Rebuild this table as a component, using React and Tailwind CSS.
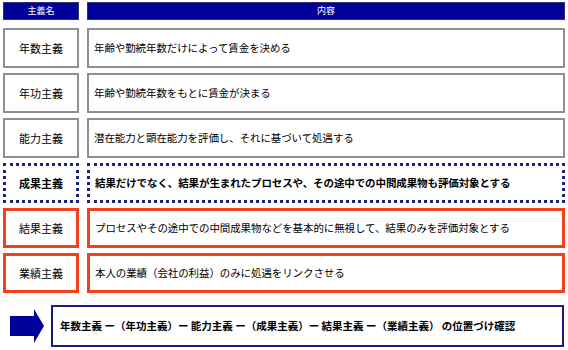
const font = { fontFamily: '"Noto Sans CJK JP", "Noto Sans", sans-serif' };

const rows = [
  { name: '年数主義', text: '年齢や勤続年数だけによって賃金を決める', kind: 'gray' },
  { name: '年功主義', text: '年齢や勤続年数をもとに賃金が決まる', kind: 'gray' },
  { name: '能力主義', text: '潜在能力と顕在能力を評価し、それに基づいて処遇する', kind: 'gray' },
  { name: '成果主義', text: '結果だけでなく、結果が生まれたプロセスや、その途中での中間成果物も評価対象とする', kind: 'dot' },
  { name: '結果主義', text: 'プロセスやその途中での中間成果物などを基本的に無視して、結果のみを評価対象とする', kind: 'red' },
  { name: '業績主義', text: '本人の業績（会社の利益）のみに処遇をリンクさせる', kind: 'red' },
];

const boxCls = {
  gray: 'border-2 border-[#8f8f8f]',
  dot: 'border-[3px] border-dotted border-[#1a237e]',
  red: 'border-[3px] border-[#f0401c]',
};

export default function App() {
  return (
    <div className="w-[568px] h-[350px] bg-white text-black overflow-hidden pl-[3px] pt-[2px]" style={font}>
      {/* Header */}
      <div className="flex gap-2 h-[18px]">
        <div className="w-[76px] bg-[#00009a] border border-[#333366] flex items-center justify-center text-white text-[9px]">主義名</div>
        <div className="w-[478px] bg-[#00009a] border border-[#333366] flex items-center justify-center text-white text-[9px]">内容</div>
      </div>

      {/* Rows */}
      <div className="flex flex-col gap-[5px] mt-[8px]">
        {rows.map(r => (
          <div key={r.name} className="flex gap-2 h-10">
            <div className={`w-[76px] flex items-center justify-center text-[11px] ${boxCls[r.kind]} ${r.kind === 'dot' ? 'font-bold' : ''}`}>
              {r.name}
            </div>
            <div className={`w-[478px] flex items-center pl-[5px] text-[10.5px] tracking-[-0.1px] ${boxCls[r.kind]} ${r.kind === 'dot' ? 'font-bold' : ''}`}>
              {r.text}
            </div>
          </div>
        ))}
      </div>

      {/* Bottom */}
      <div className="flex items-center mt-[12px] h-[42px]">
        <svg width="48" height="34" viewBox="0 0 48 34" className="shrink-0">
          <polygon points="7,7 31,7 31,0 41,17 31,34 31,27 7,27" fill="#00009a" />
        </svg>
        <div className="w-[513px] h-[42px] border-2 border-[#1a1a80] flex items-center pl-[7px] text-[10.5px] font-bold whitespace-pre">
          {'年数主義 ー（年功主義）ー 能力主義 ー（成果主義）ー 結果主義 ー（業績主義） の位置づけ確認'}
        </div>
      </div>
    </div>
  );
}
